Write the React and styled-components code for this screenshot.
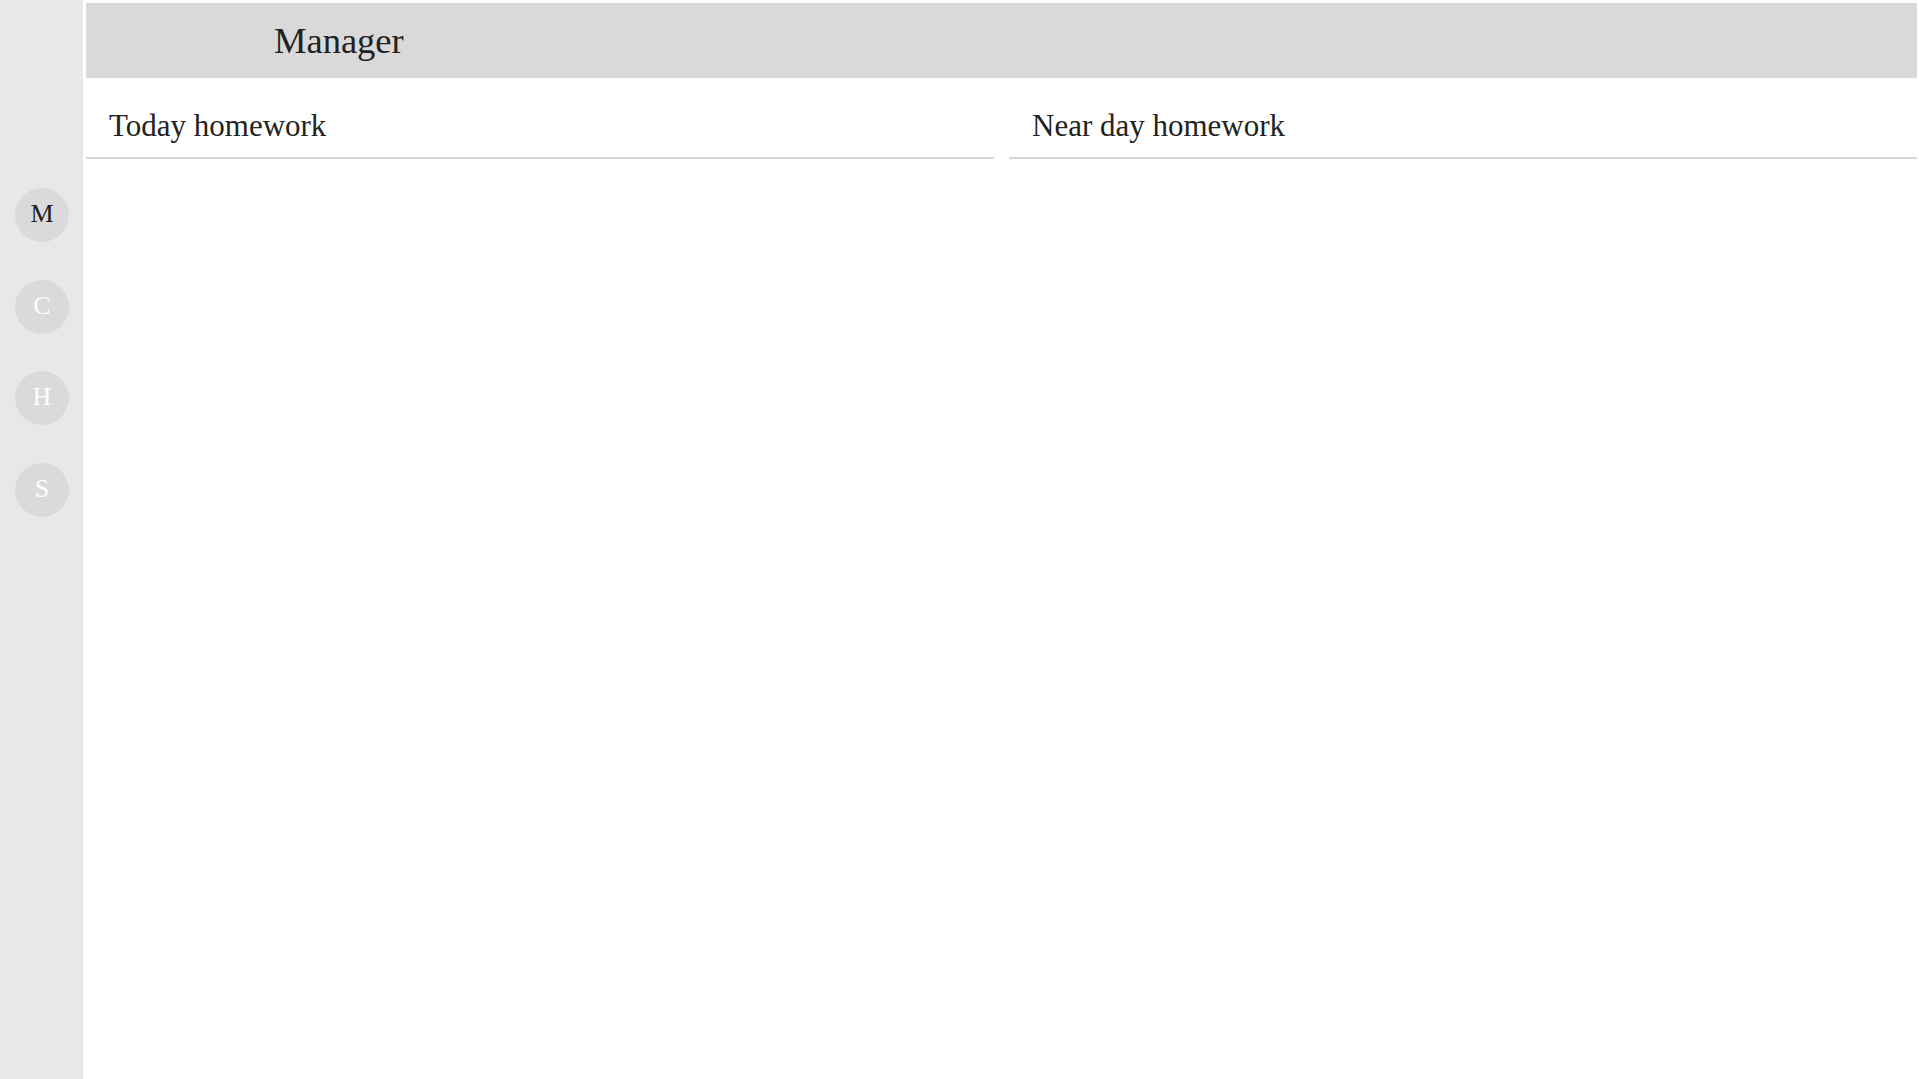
import styled, { createGlobalStyle } from 'styled-components'

const GlobalStyle = createGlobalStyle`
  html, body {
    margin: 0;
    padding: 0;
    background: #ffffff;
    font-family: 'Liberation Serif', 'Times New Roman', serif;
    color: #222222;
  }
`

const Layout = styled.div`
  display: flex;
  width: 100vw;
  height: 100vh;
  overflow: hidden;
`

const SideBar = styled.nav`
  width: 83px;
  flex-shrink: 0;
  background: #e8e8e8;
  display: flex;
  flex-direction: column;
  align-items: center;
  padding: 188px 0 0 1px;
  gap: 37.5px;
  box-sizing: border-box;
`

const NavCircle = styled.div`
  width: 54px;
  height: 54px;
  border-radius: 50%;
  background: #dadada;
  display: flex;
  align-items: center;
  justify-content: center;
  font-size: 26px;
  font-weight: 400;
  line-height: 1;
  padding-bottom: 2px;
  box-sizing: border-box;
  color: ${props => (props.active ? '#1f1f1f' : '#ffffff')};
`

const Main = styled.main`
  flex: 1;
  display: flex;
  flex-direction: column;
  padding: 3px 2px 0 3px;
`

const Header = styled.header`
  height: 75px;
  background: #d9d9d9;
  display: flex;
  align-items: center;
  padding-left: 188px;
`

const HeaderTitle = styled.h1`
  margin: 0;
  font-size: 36.5px;
  font-weight: 400;
  line-height: 75px;
  color: #222222;
`

const Columns = styled.div`
  display: grid;
  grid-template-columns: 1fr 1fr;
  column-gap: 15px;
`

const ColumnTitle = styled.h2`
  margin: 0;
  font-size: 31px;
  font-weight: 400;
  line-height: 34px;
  padding: 31px 23px 14px;
  border-bottom: 2px solid #d5d5d5;
`

function App() {
  const navItems = [
    { label: 'M', active: true },
    { label: 'C' },
    { label: 'H' },
    { label: 'S' },
  ]

  return (
    <>
      <GlobalStyle />
      <Layout>
        <SideBar>
          {navItems.map(item => (
            <NavCircle key={item.label} active={item.active}>
              {item.label}
            </NavCircle>
          ))}
        </SideBar>
        <Main>
          <Header>
            <HeaderTitle>Manager</HeaderTitle>
          </Header>
          <Columns>
            <div>
              <ColumnTitle>Today homework</ColumnTitle>
            </div>
            <div>
              <ColumnTitle>Near day homework</ColumnTitle>
            </div>
          </Columns>
        </Main>
      </Layout>
    </>
  )
}

export default App
